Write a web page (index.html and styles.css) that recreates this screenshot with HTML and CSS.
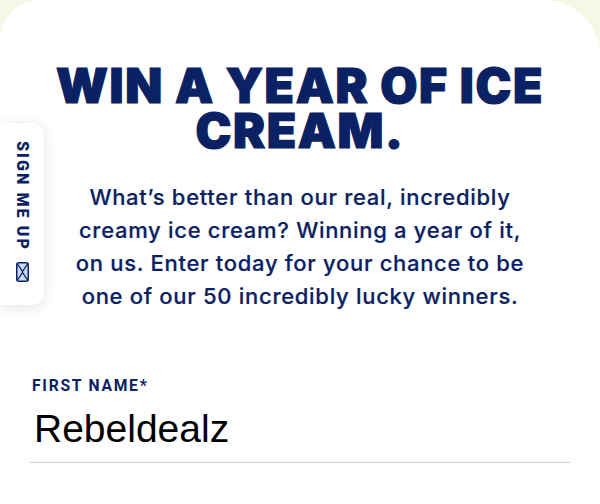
FILE: index.html
```html
<!DOCTYPE html>
<html>
<head>
<meta charset="utf-8">
<link rel="stylesheet" href="styles.css">
</head>
<body>
<div class="card">
  <h1 class="title">WIN A YEAR OF ICE<br>CREAM.</h1>
  <p class="lead">What’s better than our real, incredibly creamy ice cream? Winning a year of it, on us. Enter today for your chance to be one of our 50 incredibly lucky winners.</p>
  <form class="form">
    <label class="label">FIRST NAME*</label>
    <div class="field">Rebeldealz</div>
  </form>
  <aside class="tab">
    <span class="tab-text">SIGN ME UP</span>
    <svg class="tab-icon" width="13" height="20" viewBox="0 0 13 20">
      <rect x="0.75" y="0.75" width="11.5" height="18.5" rx="2" fill="#c9dcf7" stroke="#0a2163" stroke-width="1.5"/>
      <path d="M1.5 2 L6.5 9.5 L11.5 2 M1.5 18 L6.5 10.5 L11.5 18" fill="none" stroke="#0a2163" stroke-width="1.3"/>
    </svg>
  </aside>
</div>
</body>
</html>
```
FILE: styles.css
```css
html, body {
  margin: 0;
  padding: 0;
}
body {
  background: #f6f8e6;
  width: 600px;
  height: 504px;
  overflow: hidden;
}
.card {
  position: relative;
  background: #ffffff;
  border-radius: 40px 56px 0 0;
  height: 504px;
  padding-top: 63px;
  box-sizing: border-box;
}
.title {
  margin: 0;
  text-align: center;
  font-family: Inter, "Noto Sans", sans-serif;
  font-weight: 900;
  font-size: 48px;
  line-height: 45px;
  letter-spacing: 1.6px;
  color: #0a2163;
  -webkit-text-stroke: 1.2px #0a2163;
}
.lead {
  margin: 28px auto 0;
  width: 452px;
  text-align: center;
  font-family: Inter, "Noto Sans", sans-serif;
  font-weight: 500;
  font-size: 22px;
  letter-spacing: 0.7px;
  line-height: 33px;
  color: #0a2163;
  -webkit-text-stroke: 0.2px #0a2163;
}
.form {
  margin: 62px 30px 0 30px;
  display: flex;
  flex-direction: column;
  align-items: flex-start;
}
.label {
  display: inline-block;
  margin-left: 2px;
  font-family: Roboto, "Liberation Sans", sans-serif;
  font-weight: 700;
  font-size: 17px;
  letter-spacing: 1.9px;
  color: #0a2163;
  line-height: 20px;
  transform: scaleX(0.92);
  transform-origin: left center;
}
.field {
  align-self: stretch;
  margin-top: 11px;
  padding: 0 0 10px 4px;
  font-family: "Liberation Sans", Arial, sans-serif;
  font-size: 39px;
  line-height: 46px;
  color: #000000;
  border-bottom: 1.5px solid #cfd0d2;
}
.tab {
  position: absolute;
  left: 0;
  top: 123px;
  width: 44px;
  height: 182px;
  background: #ffffff;
  border-radius: 0 12px 12px 0;
  box-shadow: 0 2px 14px rgba(0, 0, 0, 0.12);
  display: flex;
  flex-direction: column;
  align-items: center;
  padding-top: 18px;
  box-sizing: border-box;
  gap: 11px;
}
.tab-text {
  writing-mode: vertical-rl;
  font-family: Roboto, "Liberation Sans", sans-serif;
  font-weight: 900;
  font-size: 16px;
  letter-spacing: 2.1px;
  color: #0a2163;
}
.tab-icon {
  display: block;
}
```
